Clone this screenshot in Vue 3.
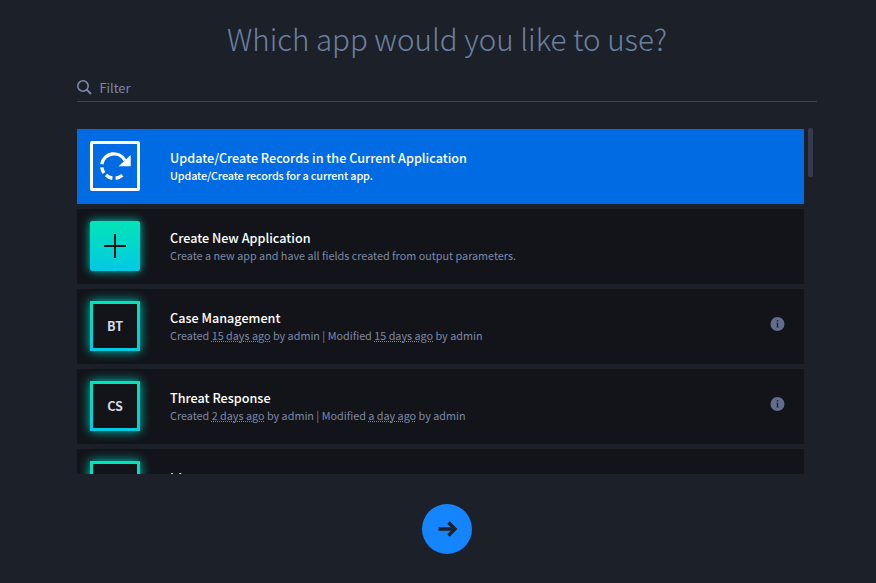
<script setup>
const apps = [
  { kind: 'update', name: 'Update/Create Records in the Current Application', text: 'Update/Create records for a current app.' },
  { kind: 'new', name: 'Create New Application', text: 'Create a new app and have all fields created from output parameters.' },
  { kind: 'app', code: 'BT', name: 'Case Management', created: '15 days ago', modified: '15 days ago' },
  { kind: 'app', code: 'CS', name: 'Threat Response', created: '2 days ago', modified: 'a day ago' },
  { kind: 'app', name: 'Id' },
]
</script>

<template>
  <main class="page">
    <h1 class="heading">Which app would you like to use?</h1>
    <label class="filter">
      <svg class="search" width="16" height="16" viewBox="0 0 16 16">
        <circle cx="6" cy="6" r="5.2" fill="none" stroke="currentColor" stroke-width="1.6" />
        <path d="M9.7 9.7L14 14" stroke="currentColor" stroke-width="1.9" />
      </svg>
      <span>Filter</span>
    </label>
    <section class="scroller">
      <div class="list">
        <article v-for="(app, i) in apps" :key="i" class="card" :class="app.kind">
          <div class="icon">
            <svg v-if="app.kind === 'update'" width="44" height="44" viewBox="0 0 44 44">
              <g fill="none" stroke="#fff" stroke-width="3.4">
                <path d="M8.8 20.2A12.4 12.4 0 0 1 32 16.5" />
                <path d="M8.8 23.4A12.4 12.4 0 0 0 11 29M13 31A12.4 12.4 0 0 0 19.4 34.2M22.6 34.2A12.4 12.4 0 0 0 29.3 31.3" />
              </g>
              <path d="M37.7 11v11.3H25.6z" fill="#fff" />
            </svg>
            <svg v-else-if="app.kind === 'new'" width="50" height="50" viewBox="0 0 50 50">
              <path d="M14 25h22M25 13v24" stroke="#101318" stroke-width="2" />
            </svg>
            <span v-else-if="app.code">{{ app.code }}</span>
          </div>
          <div class="body">
            <h2>{{ app.name }}</h2>
            <p v-if="app.text">{{ app.text }}</p>
            <p v-else-if="app.created">Created <abbr>{{ app.created }}</abbr> by admin | Modified <abbr>{{ app.modified }}</abbr> by admin</p>
          </div>
          <svg v-if="app.created" class="info" width="15" height="14" viewBox="0 0 15 14">
            <circle cx="7.5" cy="7" r="7" fill="#606d8c" />
            <path d="M6.9 3h1.3v1.4H6.9zM6.4 5.7h1.8v4h.5v.7H6.4v-.7h.5V6.4h-.5z" fill="#1b2130" />
          </svg>
        </article>
      </div>
      <div class="thumb"></div>
    </section>
    <button class="next" aria-label="Next">
      <svg width="20" height="18" viewBox="0 0 20 18">
        <path d="M.5 9h16M10.5 2.5L17 9L10.5 15.5" fill="none" stroke="#1d2129" stroke-width="3.4" />
      </svg>
    </button>
  </main>
</template>

<style>
body { margin: 0; background: #1c2028; }
</style>

<style scoped>
.page {
  box-sizing: border-box;
  width: 876px;
  height: 583px;
  padding: 15px 59px 0 77px;
  overflow: hidden;
  display: flex;
  flex-direction: column;
  align-items: center;
  background: #1c2028;
  font-family: "Noto Sans CJK JP", "Noto Sans", sans-serif;
}
.heading {
  margin: 0;
  height: 48px;
  line-height: 48px;
  font-size: 29.55px;
  font-weight: 200;
  color: #6c80a2;
  white-space: nowrap;
}
.filter {
  box-sizing: border-box;
  width: 100%;
  height: 39px;
  padding-top: 11px;
  border-bottom: 1px solid #3d4558;
  display: flex;
  align-items: center;
  color: #7d89a6;
  font-size: 12.8px;
  line-height: 20px;
}
.search { margin-right: 6.5px; }
.scroller {
  width: 740px;
  height: 346px;
  margin-top: 26px;
  display: flex;
  flex: none;
  overflow: hidden;
}
.list {
  width: 727px;
  padding-top: 1px;
  display: flex;
  flex-direction: column;
  gap: 5px;
}
.card {
  box-sizing: border-box;
  flex: none;
  height: 75px;
  padding: 12px 19px 13px 13px;
  display: flex;
  background: #121419;
}
.card.update { background: #006be2; }
.icon {
  box-sizing: border-box;
  width: 50px;
  height: 50px;
  margin-right: 30px;
  display: flex;
  align-items: center;
  justify-content: center;
  color: #d5d9e3;
  font-size: 12.6px;
  font-weight: 700;
}
.icon span { margin-bottom: 1px; }
.update .icon { border: 3px solid #fff; border-radius: 2px; }
.new .icon {
  border-radius: 2px;
  background: linear-gradient(#02e4b7, #02c9e4);
  box-shadow: 0 0 10px #00cbbf;
}
.app .icon {
  border: 3px solid;
  border-image: linear-gradient(#02e4b7, #02c9e4) 3;
  box-shadow: 0 0 10px #00cbbf;
}
.body { flex: 1; padding-top: 8px; }
h2 {
  margin: 0;
  line-height: 18px;
  font-size: 12.64px;
  font-weight: 500;
  color: #fff;
  white-space: nowrap;
}
p {
  margin: 0;
  line-height: 17px;
  font-size: 10.81px;
  color: #7d89a6;
  white-space: nowrap;
}
.update p { color: #fff; font-weight: 500; letter-spacing: -0.13px; }
abbr { text-decoration: underline dotted 1px; text-underline-offset: 1px; }
.info { margin-top: 16px; }
.thumb {
  width: 5px;
  height: 49px;
  margin-left: 4px;
  border-radius: 2px;
  background: #353b4d;
}
.next {
  width: 50px;
  height: 50px;
  margin-top: 30px;
  padding: 0;
  border: 0;
  border-radius: 50%;
  flex: none;
  display: flex;
  align-items: center;
  justify-content: center;
  background: #1584ff;
}
.next svg { margin-left: 1px; }
</style>
